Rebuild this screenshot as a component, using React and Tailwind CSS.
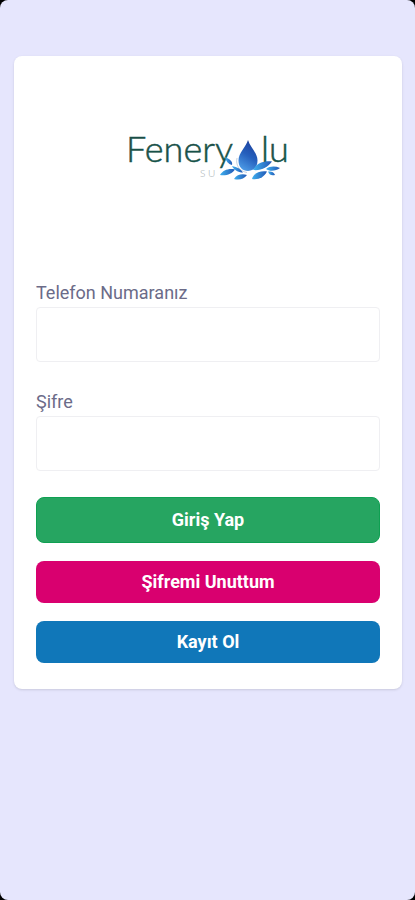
import { useState } from 'react';

const Logo = () => (
    <svg viewBox="-2 0 180 60" className="w-[180px] h-[60px]" role="img" aria-label="Feneryolu Su">
        <defs>
            <linearGradient id="ink" x1="0" y1="0" x2="0" y2="1">
                <stop offset="0" stopColor="#1d4a45" />
                <stop offset="1" stopColor="#12594c" />
            </linearGradient>
            <linearGradient id="drop" x1="0.7" y1="0" x2="0.3" y2="1">
                <stop offset="0" stopColor="#1b3f9c" />
                <stop offset="0.5" stopColor="#2560bd" />
                <stop offset="1" stopColor="#4d9be6" />
            </linearGradient>
            <linearGradient id="splash" x1="0" y1="0" x2="1" y2="0">
                <stop offset="0" stopColor="#3fb0ee" />
                <stop offset="1" stopColor="#2257b5" />
            </linearGradient>
        </defs>
        <g fill="url(#ink)" stroke="#1a5048" strokeWidth="0.5" className="font-['Lato',sans-serif] text-[36px] font-light">
            <text x="6" y="36">Fenery</text>
            <text x="141" y="36">lu</text>
        </g>
        <text x="80" y="51" fill="#a3adb0" className="font-['Lato',sans-serif] text-[10px] font-light">S U</text>

        <path d="M128 14 C126 21 118.500 27 118.500 34.500 C118.500 41 122.500 45 128 45 C133.500 45 137.500 41 137.500 34.500 C137.500 27 130 21 128 14 Z" fill="url(#drop)" />
        <path d="M117 32 C115.500 39 119 45 127 46.500" fill="none" stroke="#a9bfd6" strokeWidth="0.7" />
        <g fill="url(#splash)">
            <path d="M105 31 C109 33 113 35 112 39 C108 38 106 35 105 31 Z" />
            <path d="M100 49 C103 44 109 42 115 43.500 C112 48 106 50 100 49 Z" />
            <path d="M112 40 C117 41 121 43 123 46.500 C118 46.500 114 44 112 40 Z" />
            <path d="M114 53 C117 48.500 122 47.500 127 49 C124 53 119 54.500 114 53 Z" />
            <path d="M133 44 C136 38 143 34.500 152 35.500 C148 41 141 45 133 44 Z" />
            <path d="M132 53 C134 47 140 44.500 147 45.500 C144 51 139 54 132 53 Z" />
            <path d="M146 43 C150 40 155 40 160 42 C156 45 150 46 146 43 Z" />
            <path d="M148 45.500 C151 45 154 46 155 49 C151 50 149 48.500 148 45.500 Z" />
        </g>
    </svg>
);

const Field = ({ id, label, type, value, onChange }) => (
    <div>
        <label htmlFor={id} className="block text-lg leading-7 text-[#6b6b88]">{label}</label>
        <input
            id={id}
            type={type}
            value={value}
            onChange={(e) => onChange(e.target.value)}
            className="block w-full h-[55px] px-4 text-lg bg-white border border-[#efeff2] rounded outline-none focus:border-[#b9b9e0]"
        />
    </div>
);

const App = () => {
    const [phone, setPhone] = useState('');
    const [password, setPassword] = useState('');

    return (
        <div className="min-h-screen bg-black flex flex-col font-['Roboto',sans-serif]">
            <main className="flex-1 bg-[#e6e6fd] rounded-lg pt-14 pl-[14px] pr-[13px]">
                <div className="bg-white rounded-lg shadow-sm px-[22px] pb-[26px]">
                    <header className="flex justify-center pt-[70px] pb-[93px]">
                        <Logo />
                    </header>

                    <form onSubmit={(e) => e.preventDefault()}>
                        <div className="space-y-[26px]">
                            <Field id="phone" label="Telefon Numaranız" type="tel" value={phone} onChange={setPhone} />
                            <Field id="password" label="Şifre" type="password" value={password} onChange={setPassword} />
                        </div>

                        <div className="flex flex-col gap-[18px] mt-[26px] text-lg font-bold text-white">
                            <button type="submit" className="h-[46px] rounded-lg bg-[#26a561] border border-[#0fa052]">
                                Giriş Yap
                            </button>
                            <button type="button" className="h-[42px] rounded-lg bg-[#d9006f]">
                                Şifremi Unuttum
                            </button>
                            <button type="button" className="h-[42px] rounded-lg bg-[#1077b9]">
                                Kayıt Ol
                            </button>
                        </div>
                    </form>
                </div>
            </main>
        </div>
    );
};

export default App;
